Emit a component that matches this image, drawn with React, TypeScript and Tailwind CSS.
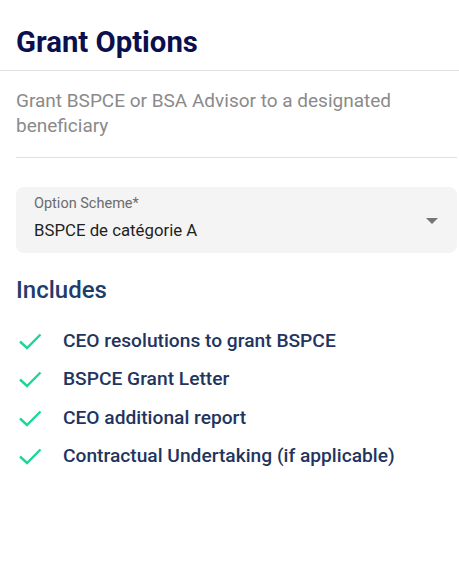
const items = [
  "CEO resolutions to grant BSPCE",
  "BSPCE Grant Letter",
  "CEO additional report",
  "Contractual Undertaking (if applicable)",
];

function Check() {
  return (
    <svg width="24" height="18" viewBox="0 0 24 18" className="shrink-0">
      <path d="M2 9.5l7 6.5L22.5 2.5" fill="none" stroke="#1fd69a" strokeWidth="2.4" />
    </svg>
  );
}

export default function App() {
  return (
    <div className="w-[459px] h-[584px] bg-white font-['Roboto',sans-serif]">
      <div className="px-4 pt-[25px] pb-[11px]">
        <h1 className="text-[29.3px] leading-[34px] font-bold text-[#0b0f4e]">Grant Options</h1>
      </div>
      <div className="h-px bg-[#e0e0e0]" />
      <div className="pl-4 pr-[2px]">
        <p className="pt-[17px] pb-[19px] text-[19px] leading-[25px] text-[#8a8a8a]">
          Grant BSPCE or BSA Advisor to a designated beneficiary
        </p>
        <div className="h-px bg-[#e0e0e0]" />
        <div className="mt-[29px] h-[66px] rounded-lg bg-[#f4f4f4] pl-[18px] pr-[19px] flex items-center justify-between">
          <div className="flex flex-col self-start pt-[8px]">
            <span className="text-[14.5px] leading-[18px] text-[#6b6b6b]">Option Scheme*</span>
            <span className="text-[16.8px] leading-[24px] text-[#1f1f1f] mt-[5px]">BSPCE de catégorie A</span>
          </div>
          <svg width="12" height="6" viewBox="0 0 12 6" className="mt-[2px]">
            <path d="M0 0h12L6 6z" fill="#757575" />
          </svg>
        </div>
        <h2 className="mt-[23px] text-[24px] leading-[28px] font-medium text-[#1f3c6b]">Includes</h2>
        <ul className="mt-[25px] flex flex-col gap-[14.3px]">
          {items.map((t) => (
            <li key={t} className="flex items-center gap-[21px] pl-[2px]">
              <Check />
              <span className="text-[19.2px] leading-[24px] font-medium text-[#1f3560]">{t}</span>
            </li>
          ))}
        </ul>
      </div>
    </div>
  );
}
